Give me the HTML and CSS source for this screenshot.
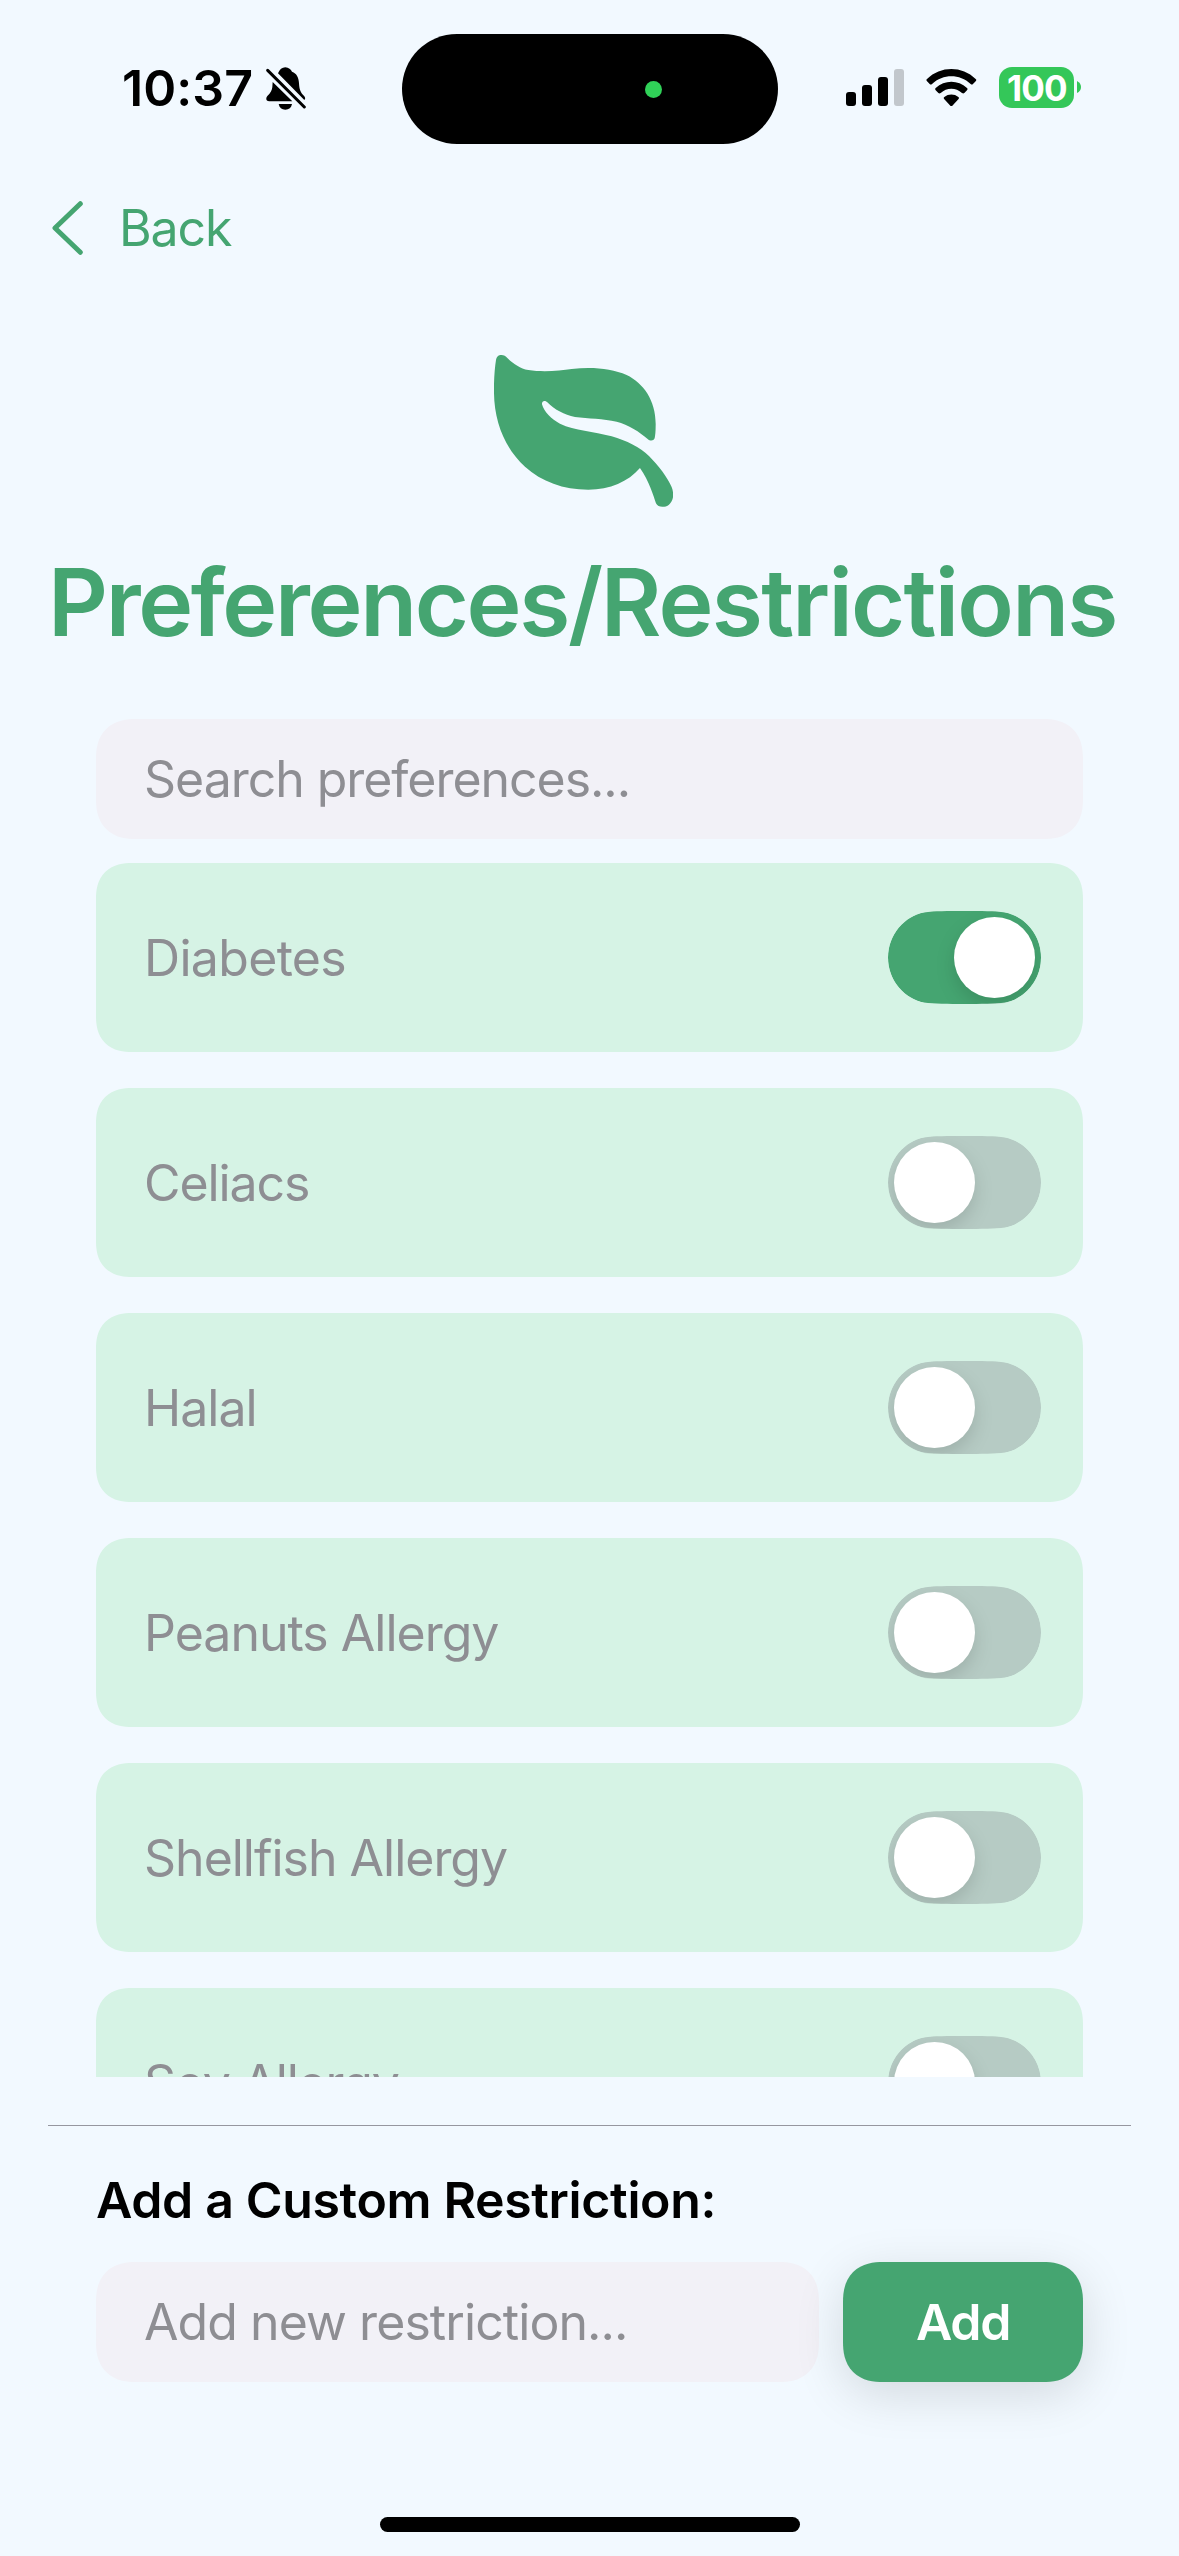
FILE: index.html
```html
<!DOCTYPE html>
<html lang="en">
<head>
<meta charset="utf-8">
<title>Preferences/Restrictions</title>
<link rel="stylesheet" href="styles.css">
</head>
<body>
<svg class="defs" width="0" height="0" aria-hidden="true">
  <symbol id="track" viewBox="0 0 153 93"><path d="M0 46.5C0 23 17 5 36 1.4C46 0 60 0 76.500 0S107 0 117 1.400C136 5 153 23 153 46.500S136 88 117 91.600C107 93 93 93 76.500 93S46 93 36 91.600C17 88 0 70 0 46.500Z"/></symbol>
</svg>
<div class="screen">
  <header class="status">
    <div class="status-left">
      <span class="time">10:37</span>
      <svg class="bell" viewBox="0 0 120 130" width="40" height="43.300">
        <path d="M36 19C41 8 48 1 58 1S75 8 78 14C92 19 98 31 99 48C100 67 103 76 115 88C118 92 119 96 115 99Z"/>
        <path d="M20 45L79 103H10C-1 103-1 93 4 87C14 77 18 70 19 60Z"/>
        <path d="M38 111H78C76 122 69 128 58 128S40 122 38 111Z"/>
        <path d="M5 10L115 120" fill="none" stroke="#000" stroke-width="9" stroke-linecap="round"/>
      </svg>
    </div>
    <div class="island"><span class="camera-dot"></span></div>
    <div class="status-right">
      <svg class="signal" viewBox="0 0 58 37" width="58" height="37">
        <rect x="0" y="23" width="10" height="14" rx="3"/>
        <rect x="16" y="16" width="10" height="21" rx="3"/>
        <rect x="32" y="8" width="10" height="29" rx="3"/>
        <rect x="48" y="0" width="10" height="37" rx="3" fill="#c2c7cc"/>
      </svg>
      <svg class="wifi" viewBox="0 0 152 112" width="50.700" height="37.300">
        <path d="M3 30C44-10 108-10 149 30Q153 33 149 37L141 45Q138 48 134 45C101 14 51 14 18 45Q14 48 11 45L3 37Q-1 33 3 30Z"/>
        <path d="M29 57C56 32 96 32 123 57Q127 60 123 64L115 72Q112 75 108 72C90 55 62 55 44 72Q40 75 37 72L29 64Q25 60 29 57Z"/>
        <path d="M55 84C67 74 85 74 97 84Q101 87 97 91L79 110Q76 113 73 110L55 91Q51 87 55 84Z"/>
      </svg>
      <div class="battery"><span class="battery-level">100</span></div>
      <svg class="nub" viewBox="0 0 4 12" width="4" height="12"><path d="M0 0Q4 2 4 6T0 12Z"/></svg>
    </div>
  </header>

  <nav class="back">
    <svg viewBox="0 0 31 54" width="31" height="54"><path d="M28.300 2.700L3 27L28.300 51.300" fill="none" stroke="currentColor" stroke-width="5" stroke-linecap="round" stroke-linejoin="round"/></svg>
    <span>Back</span>
  </nav>

  <svg class="leaf" viewBox="102 75 538 456" width="179.300" height="152">
    <path d="M108 90C110 79 116 75 124 75C132 75 137 78 142 84C160 101 180 115 205 120C250 127 300 122 335 117C395 110 455 115 500 135C552 160 590 215 587 290C587 305 586 315 584 325C580 334 570 333 563 327C540 307 505 283 470 275C430 266 385 266 345 261C312 254 285 240 262 217C254 209 245 213 246 223C252 245 274 268 300 281C345 303 400 303 455 319C500 332 540 352 567 378C595 406 624 444 635 471C643 492 641 511 627 524C616 533 594 534 588 520C580 496 568 454 540 414C505 455 450 479 385 479C310 479 245 455 195 410C135 357 103 275 102 190C101 155 104 115 108 90Z"/>
  </svg>

  <h1 class="title"><span class="t-first">Preferences/</span>Restrictions</h1>

  <div class="field search"><span class="t-search">Search preferences...</span></div>

  <main class="list">
    <div class="row"><span class="t-diabetes">Diabetes</span><span class="toggle on"><svg><use href="#track"/></svg><i class="knob"></i></span></div>
    <div class="row"><span class="t-celiacs">Celiacs</span><span class="toggle"><svg><use href="#track"/></svg><i class="knob"></i></span></div>
    <div class="row"><span class="t-halal">Halal</span><span class="toggle"><svg><use href="#track"/></svg><i class="knob"></i></span></div>
    <div class="row"><span class="t-peanuts">Peanuts Allergy</span><span class="toggle"><svg><use href="#track"/></svg><i class="knob"></i></span></div>
    <div class="row"><span class="t-shellfish">Shellfish Allergy</span><span class="toggle"><svg><use href="#track"/></svg><i class="knob"></i></span></div>
    <div class="row"><span class="t-soy">Soy Allergy</span><span class="toggle"><svg><use href="#track"/></svg><i class="knob"></i></span></div>
  </main>

  <section class="custom">
    <h2 class="custom-title">Add a Custom Restriction:</h2>
    <div class="custom-form">
      <div class="field"><span class="t-new">Add new restriction...</span></div>
      <div class="add"><span>Add</span></div>
    </div>
  </section>

  <div class="home"></div>
</div>
</body>
</html>
```
FILE: styles.css
```css
* { box-sizing: border-box; }

body {
  margin: 0;
  background: #f2f9ff;
  color: #000;
  font: 400 50px/60px Inter, "Liberation Sans", sans-serif;
  white-space: nowrap;
}

.defs { position: absolute; }

svg { display: block; flex: none; }

.screen {
  width: 1179px;
  height: 2556px;
  display: flex;
  flex-direction: column;
  overflow: hidden;
}

/* Status bar */
.status {
  height: 174px;
  flex: none;
  display: grid;
  grid-template-columns: 402px 376px 401px;
  align-items: start;
}

.status-left {
  display: flex;
  padding: 58px 0 0 122px;
}

.time {
  width: 143.500px;
  font-weight: 600;
  letter-spacing: 0.100px;
}

.bell { margin-top: 9px; }

.island {
  height: 110px;
  margin-top: 34px;
  border-radius: 55px;
  background: #000;
  display: flex;
  align-items: center;
  justify-content: flex-end;
  padding-right: 116px;
}

.camera-dot {
  width: 17px;
  height: 17px;
  border-radius: 50%;
  background: #30d158;
}

.status-right {
  display: flex;
  padding: 67px 0 0 68px;
}

.signal { margin-top: 2px; }
.wifi { margin: 2px 0 0 22px; }

.battery {
  width: 75px;
  height: 41px;
  margin-left: 22.300px;
  border-radius: 13px;
  background: #34c759;
  color: #fff;
  font-size: 35px;
  font-weight: 700;
  line-height: 42px;
  letter-spacing: -0.850px;
  padding-left: 8px;
}

.nub { margin: 14px 0 0 3px; fill: #34c759; }

/* Navigation and heading */
.back {
  height: 108px;
  flex: none;
  display: flex;
  align-items: center;
  gap: 36px;
  padding-left: 52px;
  color: #45a571;
  letter-spacing: -1.100px;
}

.leaf {
  margin: 73px 0 0 494px;
  fill: #45a571;
}

.title {
  margin: 45px 0 0 48px;
  color: #45a571;
  font-size: 93px;
  font-weight: 600;
  line-height: 100px;
  letter-spacing: -1.720px;
}

.t-first { letter-spacing: -2.350px; }

/* Text fields */
.field {
  flex: none;
  height: 120px;
  border-radius: 40px;
  corner-shape: superellipse(1.250);
  background: #f2f1f7;
  color: #8e8e93;
  line-height: 121px;
}

.search {
  margin: 67px 96px 0;
  padding-left: 48px;
}

/* Restriction list */
.list {
  height: 1214px;
  flex: none;
  margin: 24px 96px 0;
  display: flex;
  flex-direction: column;
  gap: 36px;
  overflow: hidden;
}

.row {
  height: 189px;
  flex: none;
  display: flex;
  align-items: center;
  justify-content: space-between;
  padding: 0 42px 0 48px;
  border-radius: 36px;
  corner-shape: superellipse(1.250);
  background: #d6f3e5;
  color: #8e8e93;
}

.toggle {
  width: 153px;
  height: 93px;
  display: grid;
  align-items: center;
  fill: #b6cbc4;
  clip-path: inset(0 round 46px);
}

.toggle svg, .knob { grid-area: 1 / 1; }

.toggle svg { width: 153px; height: 93px; }

.knob {
  width: 81px;
  height: 81px;
  margin: 0 6px;
  border-radius: 50%;
  background: #fff;
  filter: drop-shadow(0 8px 9px rgba(0, 0, 0, 0.130));
}

.on { fill: #45a571; }
.on .knob { justify-self: end; }

/* Custom restriction form */
.custom {
  flex: none;
  margin: 48px 48px 0;
  border-top: 1px solid #9697a0;
  padding: 44px 48px 0;
}

.custom-title {
  margin: 0 0 32px;
  font-size: 50px;
  font-weight: 600;
  letter-spacing: -0.360px;
}

.custom-form { display: flex; gap: 24px; }

.custom-form .field {
  width: 723px;
  padding-left: 48px;
}

.add {
  width: 240px;
  height: 120px;
  border-radius: 40px;
  corner-shape: superellipse(1.250);
  background: #45a571;
  box-shadow: 0 12px 50px rgba(0, 0, 0, 0.130);
  color: #fff;
  font-weight: 600;
  line-height: 121px;
  letter-spacing: -1.300px;
  padding-left: 73px;
}

/* Home indicator */
.home {
  flex: none;
  width: 420px;
  height: 15px;
  margin: 135px auto 0;
  border-radius: 8px;
  background: #000;
}

/* Per-label tracking */
.t-search { letter-spacing: -1.040px; }
.t-diabetes { letter-spacing: -0.680px; }
.t-celiacs { letter-spacing: -1.090px; }
.t-halal { letter-spacing: -0.950px; }
.t-peanuts { letter-spacing: -1.000px; }
.t-shellfish { letter-spacing: -1.010px; }
.t-soy { letter-spacing: -1.200px; }
.t-new { letter-spacing: -0.930px; }
```
